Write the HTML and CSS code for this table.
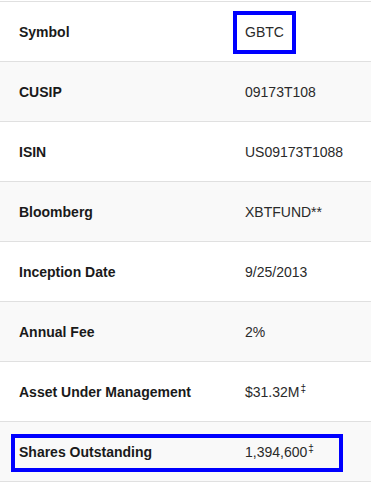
FILE: index.html
```html
<!DOCTYPE html>
<html lang="en">
<head>
<meta charset="utf-8">
<title>Fund details</title>
<link rel="stylesheet" href="styles.css">
</head>
<body>
<div class="table">
  <div class="row">
    <div class="label">Symbol</div>
    <div class="value"><span class="mark">GBTC</span></div>
  </div>
  <div class="row alt">
    <div class="label">CUSIP</div>
    <div class="value">09173T108</div>
  </div>
  <div class="row">
    <div class="label">ISIN</div>
    <div class="value">US09173T1088</div>
  </div>
  <div class="row alt">
    <div class="label">Bloomberg</div>
    <div class="value">XBTFUND**</div>
  </div>
  <div class="row">
    <div class="label">Inception Date</div>
    <div class="value">9/25/2013</div>
  </div>
  <div class="row alt">
    <div class="label">Annual Fee</div>
    <div class="value">2%</div>
  </div>
  <div class="row">
    <div class="label">Asset Under Management</div>
    <div class="value">$31.32M<sup class="dag">‡</sup></div>
  </div>
  <div class="row alt boxed">
    <div class="hl">
      <div class="label">Shares Outstanding</div>
      <div class="value">1,394,600<sup class="dag">‡</sup></div>
    </div>
  </div>
</div>
</body>
</html>
```
FILE: styles.css
```css
html, body {
  margin: 0;
  padding: 0;
  background: #ffffff;
}
body {
  font-family: "Liberation Sans", Arial, sans-serif;
  font-size: 14px;
  color: #1c1c1c;
  padding-top: 1px;
}
.table {
  width: 371px;
  border-bottom: 1px solid #e0e0e0;
}
.row {
  display: grid;
  grid-template-columns: 226px 1fr;
  align-items: center;
  box-sizing: border-box;
  height: 60px;
  padding: 2px 0 0 19px;
  border-top: 1px solid #e0e0e0;
  background: #ffffff;
}
.row.alt {
  background: #f9f9f9;
}
.label {
  font-weight: 700;
  color: #1a1a1a;
  line-height: 15px;
}
.value {
  font-weight: 400;
  color: #2a2a2a;
  line-height: 15px;
}
.mark {
  display: inline-block;
  margin-left: -12px;
  padding: 10px 8px;
  border: 4px solid #0000ff;
  line-height: 15px;
}
.dag {
  font-size: 10px;
  line-height: 0;
  vertical-align: 5px;
  margin-left: 1px;
  color: #1a1a1a;
}
.row.boxed {
  display: flex;
  padding-left: 11px;
}
.hl {
  display: grid;
  grid-template-columns: 226px 1fr;
  align-items: center;
  box-sizing: border-box;
  width: 332px;
  height: 38px;
  padding-left: 4px;
  border: 4px solid #0000ff;
}
```
